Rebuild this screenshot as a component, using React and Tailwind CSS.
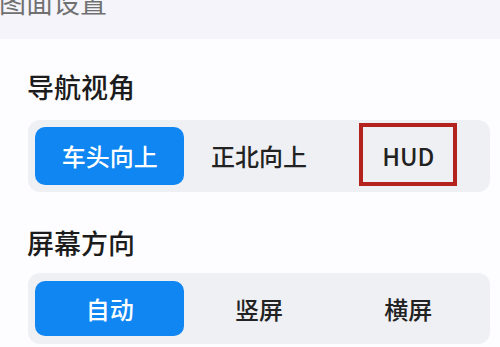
import React from 'react';

const font = { fontFamily: '"Noto Sans CJK SC", "Noto Sans", sans-serif' };

const Segmented = ({ options, active, className = '' }) => (
  <div className={`ml-[28px] mr-[10px] flex rounded-[12px] bg-[#eff0f4] px-[7px] ${className}`}>
    {options.map((opt, i) => (
      <div
        key={opt}
        className={`flex flex-1 items-center justify-center rounded-[10px] text-[24px] font-medium ${
          i === active ? 'bg-[#0f86f2] text-white' : 'text-[#222]'
        }`}
      >
        {opt}
      </div>
    ))}
  </div>
);

const App = () => {
  return (
    <div className="relative h-[347px] w-[500px] overflow-hidden bg-[#fdfdff]" style={font}>
      {/* cropped page title */}
      <div className="h-[39px] overflow-hidden bg-[#f4f4fa]">
        <div className="-mt-[13px] -ml-[1px] text-[27px] leading-[30px] text-[#707070]">图面设置</div>
      </div>

      {/* Navigation view */}
      <div className="mt-[33px] pl-[27px] text-[27px] font-medium leading-[30px] text-[#1c1c1c]">导航视角</div>
      <Segmented
        options={['车头向上', '正北向上', 'HUD']}
        active={0}
        className="mt-[18px] h-[72px] py-[7px]"
      />

      {/* Screen orientation */}
      <div className="mt-[36px] pl-[27px] text-[27px] font-medium leading-[30px] text-[#1c1c1c]">屏幕方向</div>
      <Segmented
        options={['自动', '竖屏', '横屏']}
        active={0}
        className="mt-[15px] h-[71px] py-[8px]"
      />

      {/* annotation box around HUD */}
      <div className="absolute left-[359px] top-[123px] h-[63px] w-[98px] border-[4px] border-[#b3221d]" />
    </div>
  );
};

export default App;
